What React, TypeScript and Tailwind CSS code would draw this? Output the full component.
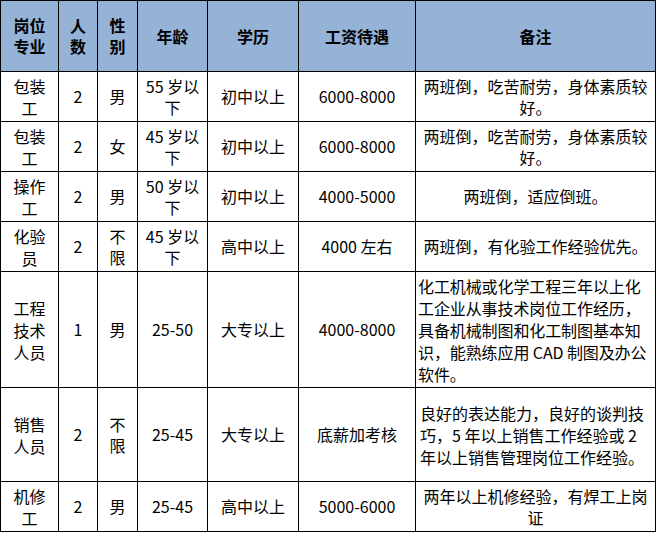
import React from 'react';

type Row = {
  post: string;
  count: string;
  gender: string;
  age: string;
  edu: string;
  pay: string;
  note: string;
  height: number;
  noteClass?: string;
};

const rows: Row[] = [
  { post: '包装工', count: '2', gender: '男', age: '55 岁以下', edu: '初中以上', pay: '6000-8000', note: '两班倒，吃苦耐劳，身体素质较好。', height: 50 },
  { post: '包装工', count: '2', gender: '女', age: '45 岁以下', edu: '初中以上', pay: '6000-8000', note: '两班倒，吃苦耐劳，身体素质较好。', height: 50 },
  { post: '操作工', count: '2', gender: '男', age: '50 岁以下', edu: '初中以上', pay: '4000-5000', note: '两班倒，适应倒班。', height: 50 },
  { post: '化验员', count: '2', gender: '不限', age: '45 岁以下', edu: '高中以上', pay: '4000 左右', note: '两班倒，有化验工作经验优先。', height: 50 },
  {
    post: '工程技术人员',
    count: '1',
    gender: '男',
    age: '25-50',
    edu: '大专以上',
    pay: '4000-8000',
    note: '化工机械或化学工程三年以上化工企业从事技术岗位工作经历，具备机械制图和化工制图基本知识，能熟练应用 CAD 制图及办公软件。',
    height: 116,
    noteClass: 'px-[2px] text-left leading-[22px] tracking-[-0.1px]',
  },
  {
    post: '销售人员',
    count: '2',
    gender: '不限',
    age: '25-45',
    edu: '大专以上',
    pay: '底薪加考核',
    note: '良好的表达能力，良好的谈判技巧，5 年以上销售工作经验或 2 年以上销售管理岗位工作经验。',
    height: 94,
    noteClass: 'px-[4px] text-left leading-[22px]',
  },
  { post: '机修工', count: '2', gender: '男', age: '25-45', edu: '高中以上', pay: '5000-6000', note: '两年以上机修经验，有焊工上岗证', height: 50 },
];

const headers = ['岗位专业', '人数', '性别', '年龄', '学历', '工资待遇', '备注'];
const widths = [58, 39, 40, 70, 91, 117, 240];

const cell = 'border border-black align-middle text-center';

export default function App() {
  return (
    <div
      className="h-[533px] w-[656px] bg-white text-black"
      style={{ fontFamily: '"Noto Sans CJK SC", "Noto Sans", sans-serif' }}
    >
      <table className="table-fixed border-collapse w-[655px] text-[16px] leading-[21px]">
        <colgroup>
          {widths.map((w, i) => (
            <col key={i} style={{ width: `${w}px` }} />
          ))}
        </colgroup>
        <thead>
          <tr className="h-[71px] bg-[#95b3d7]">
            {headers.map((h, i) => (
              <th key={h} className={`${cell} font-bold ${i === 0 ? 'px-[6px]' : 'px-[5px]'}`}>
                {h}
              </th>
            ))}
          </tr>
        </thead>
        <tbody>
          {rows.map((r, idx) => (
            <tr key={idx} style={{ height: `${r.height}px` }}>
              <td className={`${cell} px-[6px] leading-[22px]`}>{r.post}</td>
              <td className={`${cell} px-[5px]`}>{r.count}</td>
              <td className={`${cell} px-[5px]`}>{r.gender}</td>
              <td className={`${cell} px-[4px]`}>{r.age}</td>
              <td className={`${cell} px-[4px]`}>{r.edu}</td>
              <td className={`${cell} px-[4px]`}>{r.pay}</td>
              <td className={`${cell} ${r.noteClass ?? 'px-[5px]'}`}>{r.note}</td>
            </tr>
          ))}
        </tbody>
      </table>
    </div>
  );
}
